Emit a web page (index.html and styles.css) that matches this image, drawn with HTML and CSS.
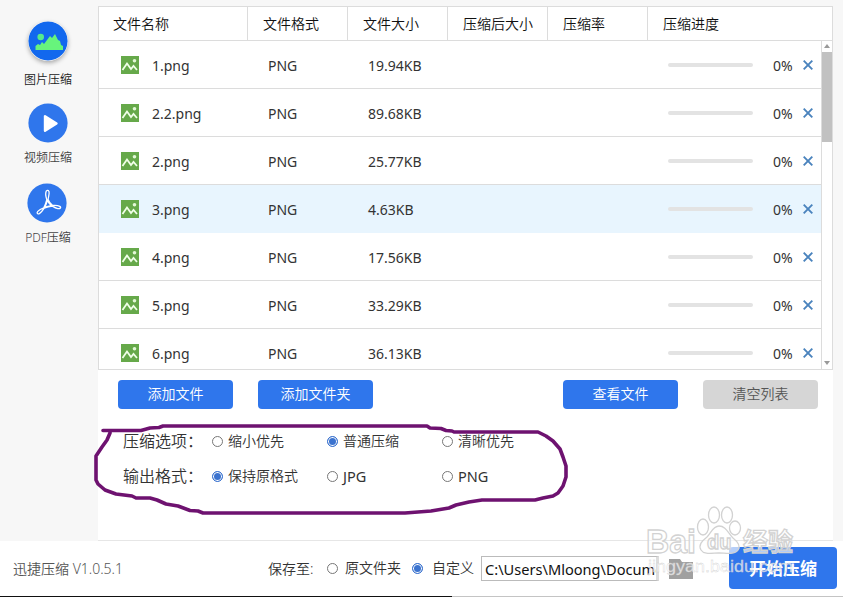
FILE: index.html
```
<!DOCTYPE html>
<html lang="zh-CN">
<head>
    <meta charset="UTF-8">
    <title>迅捷压缩</title>
    <link rel="stylesheet" href="styles.css">
</head>
<body>
    <svg class="defs">
        <symbol id="pic" viewBox="0 0 18 18">
            <rect width="18" height="18" fill="#66a94a"/>
            <circle cx="13.5" cy="4.7" r="1.8" fill="#e4f8d8"/>
            <path d="M1.5 14L6 7.5l4 5.500 2.500-3 3.500 4" fill="none" stroke="#f0ffe8" stroke-width="1.8"/>
        </symbol>
        <symbol id="cross" viewBox="0 0 10 10">
            <path d="M.7.7l8.6 8.6M9.3.7L.7 9.3" stroke="#4a83bd" stroke-width="1.9"/>
        </symbol>
    </svg>
    <div class="app">
        <div class="top">
            <div class="sidebar">
                <div class="tab active">
                    <svg class="round shadow" viewBox="0 0 40 40">
                        <circle cx="20" cy="20" r="19.6" fill="#1268ee"/>
                        <circle cx="12.7" cy="16" r="3.3" fill="#55ea8c"/>
                        <path d="M7.5 29v-4l2.5-2 2 1 2-3 2 2 6-8 2 2 3-4 3 6 2 1 1 4 2 1v4z" fill="#67f47c"/>
                    </svg>
                    <span>图片压缩</span>
                </div>
                <div class="tab">
                    <svg class="round" viewBox="0 0 40 40">
                        <circle cx="20" cy="20" r="19.6" fill="#2f76ec"/>
                        <path d="M17 13.2v14.6L28.5 20.5z" fill="#fff" stroke="#fff" stroke-width="2.4" stroke-linejoin="round"/>
                    </svg>
                    <span>视频压缩</span>
                </div>
                <div class="tab">
                    <svg class="round pdf" viewBox="0 0 40 40">
                        <circle cx="20" cy="20" r="19.6" fill="#2f76ec"/>
                        <path d="M19.2 8.2c1.4-2 3.3-.4 2.9 2.3-.2 2-.8 4.2-1 6 .8 2.5 2.6 4.5 4.5 6 2.5-.2 5.3-.1 7.2.8 1.8 1 .4 2.7-2 2.3-1.8-.3-3.8-1.4-5.4-2.5-2.5.3-5.8 1.1-8.2 2-1.5 2.3-3 4.4-4.8 5.5-2 1-3-.6-1.6-2.2 1.5-1.6 3.8-2.7 6-3.5 1.2-2.5 2.3-5.5 3-8.3-.8-2.5-1.5-6.500-.6-8.400zM20.3 17.5c-.6 2.5-1.5 4.7-2.5 6.7 2.1-.8 4.3-1.3 6.6-1.6-1.7-1.5-3.1-3.2-4.1-5.1z" fill="none" stroke="#fff" stroke-width="1.3"/>
                    </svg>
                    <span>PDF压缩</span>
                </div>
            </div>
            <div class="main">
                <div class="table">
                    <div class="head">
                        <div>文件名称</div>
                        <div>文件格式</div>
                        <div>文件大小</div>
                        <div>压缩后大小</div>
                        <div>压缩率</div>
                        <div>压缩进度</div>
                    </div>
                    <div class="list">
                        <div class="rows">
                            <div class="row">
                                <div class="name"><svg class="pic"><use href="#pic"/></svg><span>1.png</span></div>
                                <div class="type">PNG</div>
                                <div class="size">19.94KB</div>
                                <div class="bar"></div>
                                <div class="percent">0%</div>
                                <svg class="cross"><use href="#cross"/></svg>
                            </div>
                            <div class="row">
                                <div class="name"><svg class="pic"><use href="#pic"/></svg><span>2.2.png</span></div>
                                <div class="type">PNG</div>
                                <div class="size">89.68KB</div>
                                <div class="bar"></div>
                                <div class="percent">0%</div>
                                <svg class="cross"><use href="#cross"/></svg>
                            </div>
                            <div class="row">
                                <div class="name"><svg class="pic"><use href="#pic"/></svg><span>2.png</span></div>
                                <div class="type">PNG</div>
                                <div class="size">25.77KB</div>
                                <div class="bar"></div>
                                <div class="percent">0%</div>
                                <svg class="cross"><use href="#cross"/></svg>
                            </div>
                            <div class="row selected">
                                <div class="name"><svg class="pic"><use href="#pic"/></svg><span>3.png</span></div>
                                <div class="type">PNG</div>
                                <div class="size">4.63KB</div>
                                <div class="bar"></div>
                                <div class="percent">0%</div>
                                <svg class="cross"><use href="#cross"/></svg>
                            </div>
                            <div class="row">
                                <div class="name"><svg class="pic"><use href="#pic"/></svg><span>4.png</span></div>
                                <div class="type">PNG</div>
                                <div class="size">17.56KB</div>
                                <div class="bar"></div>
                                <div class="percent">0%</div>
                                <svg class="cross"><use href="#cross"/></svg>
                            </div>
                            <div class="row">
                                <div class="name"><svg class="pic"><use href="#pic"/></svg><span>5.png</span></div>
                                <div class="type">PNG</div>
                                <div class="size">33.29KB</div>
                                <div class="bar"></div>
                                <div class="percent">0%</div>
                                <svg class="cross"><use href="#cross"/></svg>
                            </div>
                            <div class="row">
                                <div class="name"><svg class="pic"><use href="#pic"/></svg><span>6.png</span></div>
                                <div class="type">PNG</div>
                                <div class="size">36.13KB</div>
                                <div class="bar"></div>
                                <div class="percent">0%</div>
                                <svg class="cross"><use href="#cross"/></svg>
                            </div>
                        </div>
                        <div class="scroll">
                            <div class="arrow up"></div>
                            <div class="thumb"></div>
                            <div class="arrow down"></div>
                        </div>
                    </div>
                </div>
                <div class="buttons">
                    <button>添加文件</button>
                    <button>添加文件夹</button>
                    <button class="view">查看文件</button>
                    <button class="clear">清空列表</button>
                </div>
                <div class="options">
                    <div class="option">
                        <span class="title">压缩选项：</span>
                        <label><i class="radio"></i><span>缩小优先</span></label>
                        <label><i class="radio on"></i><span>普通压缩</span></label>
                        <label><i class="radio"></i><span>清晰优先</span></label>
                    </div>
                    <div class="option">
                        <span class="title">输出格式：</span>
                        <label><i class="radio on"></i><span>保持原格式</span></label>
                        <label><i class="radio"></i><span class="latin">JPG</span></label>
                        <label><i class="radio"></i><span class="latin">PNG</span></label>
                    </div>
                </div>
            </div>
        </div>
        <div class="footer">
            <span class="version">迅捷压缩 V1.0.5.1</span>
            <span class="save">保存至:</span>
            <label class="origin"><i class="radio"></i><span>原文件夹</span></label>
            <label class="custom"><i class="radio on"></i><span>自定义</span></label>
            <div class="path">C:\Users\Mloong\Documents</div>
            <svg class="folder" viewBox="0 0 24 20">
                <path d="M0 0h11l2 3h11v17H0z" fill="#a0a0a0"/>
            </svg>
            <button class="start">开始压缩</button>
        </div>
        <div class="edge"></div>
    </div>

    <!-- pen circle around the options -->
    <svg class="pen" viewBox="0 0 843 597">
        <path d="M103 430.5H141L150 428 159 427.5 163 426H427L430 428 441 428.5 446 430.5 452 431 454 432H538L546 436 553 441 560 449 563 457 566 466V477L563 486 558 493 553 496 543 498 535 500H482L469 502 456 505 449 508 431 511 405 513H203L198 511 190 510.5 178 506 166 504 157 500 150 498H136L132 496 116 494 105 490 98 484 96 480V456L102 447 107 440 110 433"/>
    </svg>

    <!-- watermark -->
    <svg class="mark" viewBox="0 0 170 85">
        <g fill="#fff" fill-opacity=".65" stroke="#d2d2d2" stroke-width="1.3">
            <ellipse cx="61" cy="30" rx="5.5" ry="8"/>
            <ellipse cx="72" cy="18" rx="5.5" ry="8"/>
            <ellipse cx="85" cy="18" rx="5.5" ry="8"/>
            <ellipse cx="93" cy="31" rx="5.5" ry="7"/>
            <path d="M77 29c7 0 9 7 14 12 5 4 8 8 5 12-3 5-12 3-19 3s-15 2-18-3c-3-5 1-9 6-13 4-4 6-11 12-11z"/>
            <text class="bai" x="4" y="56" textLength="50" lengthAdjust="spacingAndGlyphs">Bai</text>
            <text class="du" x="65" y="52">du</text>
            <text class="exp" x="101" y="54">经验</text>
        </g>
        <text class="url" x="6" y="75" textLength="145" lengthAdjust="spacingAndGlyphs">jingyan.baidu.com</text>
    </svg>
</body>
</html>
```
FILE: styles.css
```
* {
    box-sizing: border-box;
}
body {
    margin: 0;
    overflow: hidden;
    font-family: "Noto Sans", "Noto Sans CJK SC", sans-serif;
    font-size: 14px;
    font-weight: 350;
    color: #333;
}
.defs {
    display: none;
}
.app {
    width: 843px;
    height: 597px;
    display: flex;
    flex-direction: column;
    background-color: #fff;
}
.top {
    height: 541px;
    display: flex;
    background-color: #f7f7f7;
}
.sidebar {
    width: 98px;
    padding: 21px 2px 0 0;
}
.tab {
    height: 80px;
    display: flex;
    flex-direction: column;
    align-items: center;
    font-size: 12px;
    line-height: 18px;
    color: #444;
}
.tab.active {
    height: 82px;
    color: #222;
}
.tab span {
    margin-top: 6px;
}
.tab.active span {
    margin-top: 10px;
}
.round {
    width: 40px;
    height: 40px;
}
.shadow {
    border-radius: 50%;
    box-shadow: 0 2px 4px #aaa;
}
.pdf {
    margin-right: 2px;
}
.main {
    width: 735px;
    padding-top: 6px;
    background: linear-gradient(#f7f7f7 6px, #fff 6px);
    border-bottom: 1px solid #e6e6e6;
}
.table {
    height: 364px;
    border: 1px solid #dcdcdc;
}
.head {
    height: 34px;
    display: grid;
    grid-template-columns: 149px 100px 100px 100px 100px 1fr;
    border-bottom: 1px solid #dcdcdc;
    line-height: 33px;
    color: #111;
}
.head div {
    padding-left: 14px;
    border-right: 1px solid #dcdcdc;
    white-space: nowrap;
}
.head div + div {
    padding-left: 15px;
}
.head div:last-child {
    border-right: 0;
}
.list {
    height: 328px;
    display: flex;
    overflow: hidden;
}
.rows {
    flex-grow: 1;
}
.row {
    height: 48px;
    display: flex;
    align-items: center;
    border-bottom: 1px solid #dcdcdc;
    font-weight: 400;
}
.row.selected {
    background-color: #e8f5fe;
    border-color: #e8f5fe;
    margin-left: -1px;
    padding-left: 1px;
}
.name {
    width: 169px;
    display: flex;
    align-items: center;
    padding-left: 22px;
}
.name span, .type, .size, .percent {
    padding-top: 2px;
}
.pic {
    width: 18px;
    height: 18px;
    margin-right: 13px;
}
.type {
    width: 100px;
}
.size {
    width: 300px;
}
.bar {
    width: 85px;
    height: 4px;
    border-radius: 2px;
    background-color: #e3e3e3;
}
.percent {
    width: 50px;
    padding-left: 20px;
}
.cross {
    width: 10px;
    height: 10px;
}
.scroll {
    width: 11px;
    display: flex;
    flex-direction: column;
    align-items: center;
    border-left: 1px solid #dcdcdc;
}
.arrow {
    border-left: 3px solid transparent;
    border-right: 3px solid transparent;
}
.up {
    margin: 3px 0 4px;
    border-bottom: 4px solid #999;
}
.down {
    margin: auto 0 4px;
    border-top: 4px solid #999;
}
.thumb {
    width: 11px;
    height: 90px;
    background-color: #c1c1c1;
}
button {
    width: 115px;
    height: 29px;
    padding: 0 0 3px;
    border: 0;
    border-radius: 4px;
    font: inherit;
    color: #fff;
    background-color: #2f76ec;
}
.buttons {
    display: flex;
    padding: 10px 15px 0 20px;
    gap: 25px;
}
.view {
    margin-left: auto;
}
.clear {
    color: #555;
    background-color: #d6d6d6;
}
.options {
    padding: 15px 0 0 24px;
}
.option {
    height: 35px;
    display: flex;
    align-items: center;
}
.title {
    width: 90px;
    padding: 0 0 3px 1px;
    font-size: 16px;
    white-space: nowrap;
}
label {
    display: flex;
    align-items: center;
}
label span {
    padding-bottom: 3px;
}
.latin {
    padding-bottom: 1px;
    font-size: 14.5px;
    font-weight: 400;
}
.option label {
    width: 115px;
}
.radio {
    width: 11px;
    height: 11px;
    margin-right: 5px;
    border: 1px solid #777;
    border-radius: 50%;
    background-color: #fff;
}
.radio.on {
    border-color: #3b73cf;
    background-color: #3b73cf;
    box-shadow: inset 0 0 0 1px #fff;
}
.footer {
    height: 55px;
    display: flex;
    align-items: center;
    padding-left: 13px;
}
.version {
    width: 255px;
    padding-bottom: 2px;
    color: #555;
}
.save {
    width: 59px;
    padding-bottom: 2px;
}
.origin {
    width: 85px;
}
.custom {
    width: 69px;
}
.origin .radio {
    margin-right: 7px;
}
.custom .radio {
    margin-right: 9px;
}
.path {
    width: 178px;
    height: 25px;
    padding-left: 3px;
    border: 1px solid #bbb;
    border-right-width: 3px;
    border-right-color: #ddd;
    font-size: 14.6px;
    font-weight: 400;
    line-height: 24px;
    white-space: nowrap;
    overflow: hidden;
    color: #111;
}
.folder {
    width: 24px;
    height: 20px;
    margin-left: 10px;
}
.start {
    width: 108px;
    height: 42px;
    margin: 0 0 2px 36px;
    padding-bottom: 0;
    font-size: 17px;
    font-weight: bold;
}
.edge {
    height: 1px;
    background: linear-gradient(to right, #111 452px, #c4c4c4 452px);
}
.pen {
    position: absolute;
    left: 0;
    top: 0;
    width: 843px;
    height: 597px;
}
.pen path {
    fill: none;
    stroke: #6e1270;
    stroke-width: 3.6;
    stroke-linecap: round;
    stroke-linejoin: round;
}
.mark {
    position: absolute;
    left: 642px;
    top: 497px;
    width: 170px;
    height: 85px;
}
.bai {
    font: bold 34px "Liberation Sans", sans-serif;
}
.du {
    font: bold 20px "Liberation Sans", sans-serif;
}
.exp {
    font: bold 25px "Noto Sans CJK SC", sans-serif;
}
.url {
    font: 16px "Liberation Sans", sans-serif;
    fill: #fff;
    fill-opacity: .7;
    stroke: #ccc;
    stroke-width: .3;
}
```
